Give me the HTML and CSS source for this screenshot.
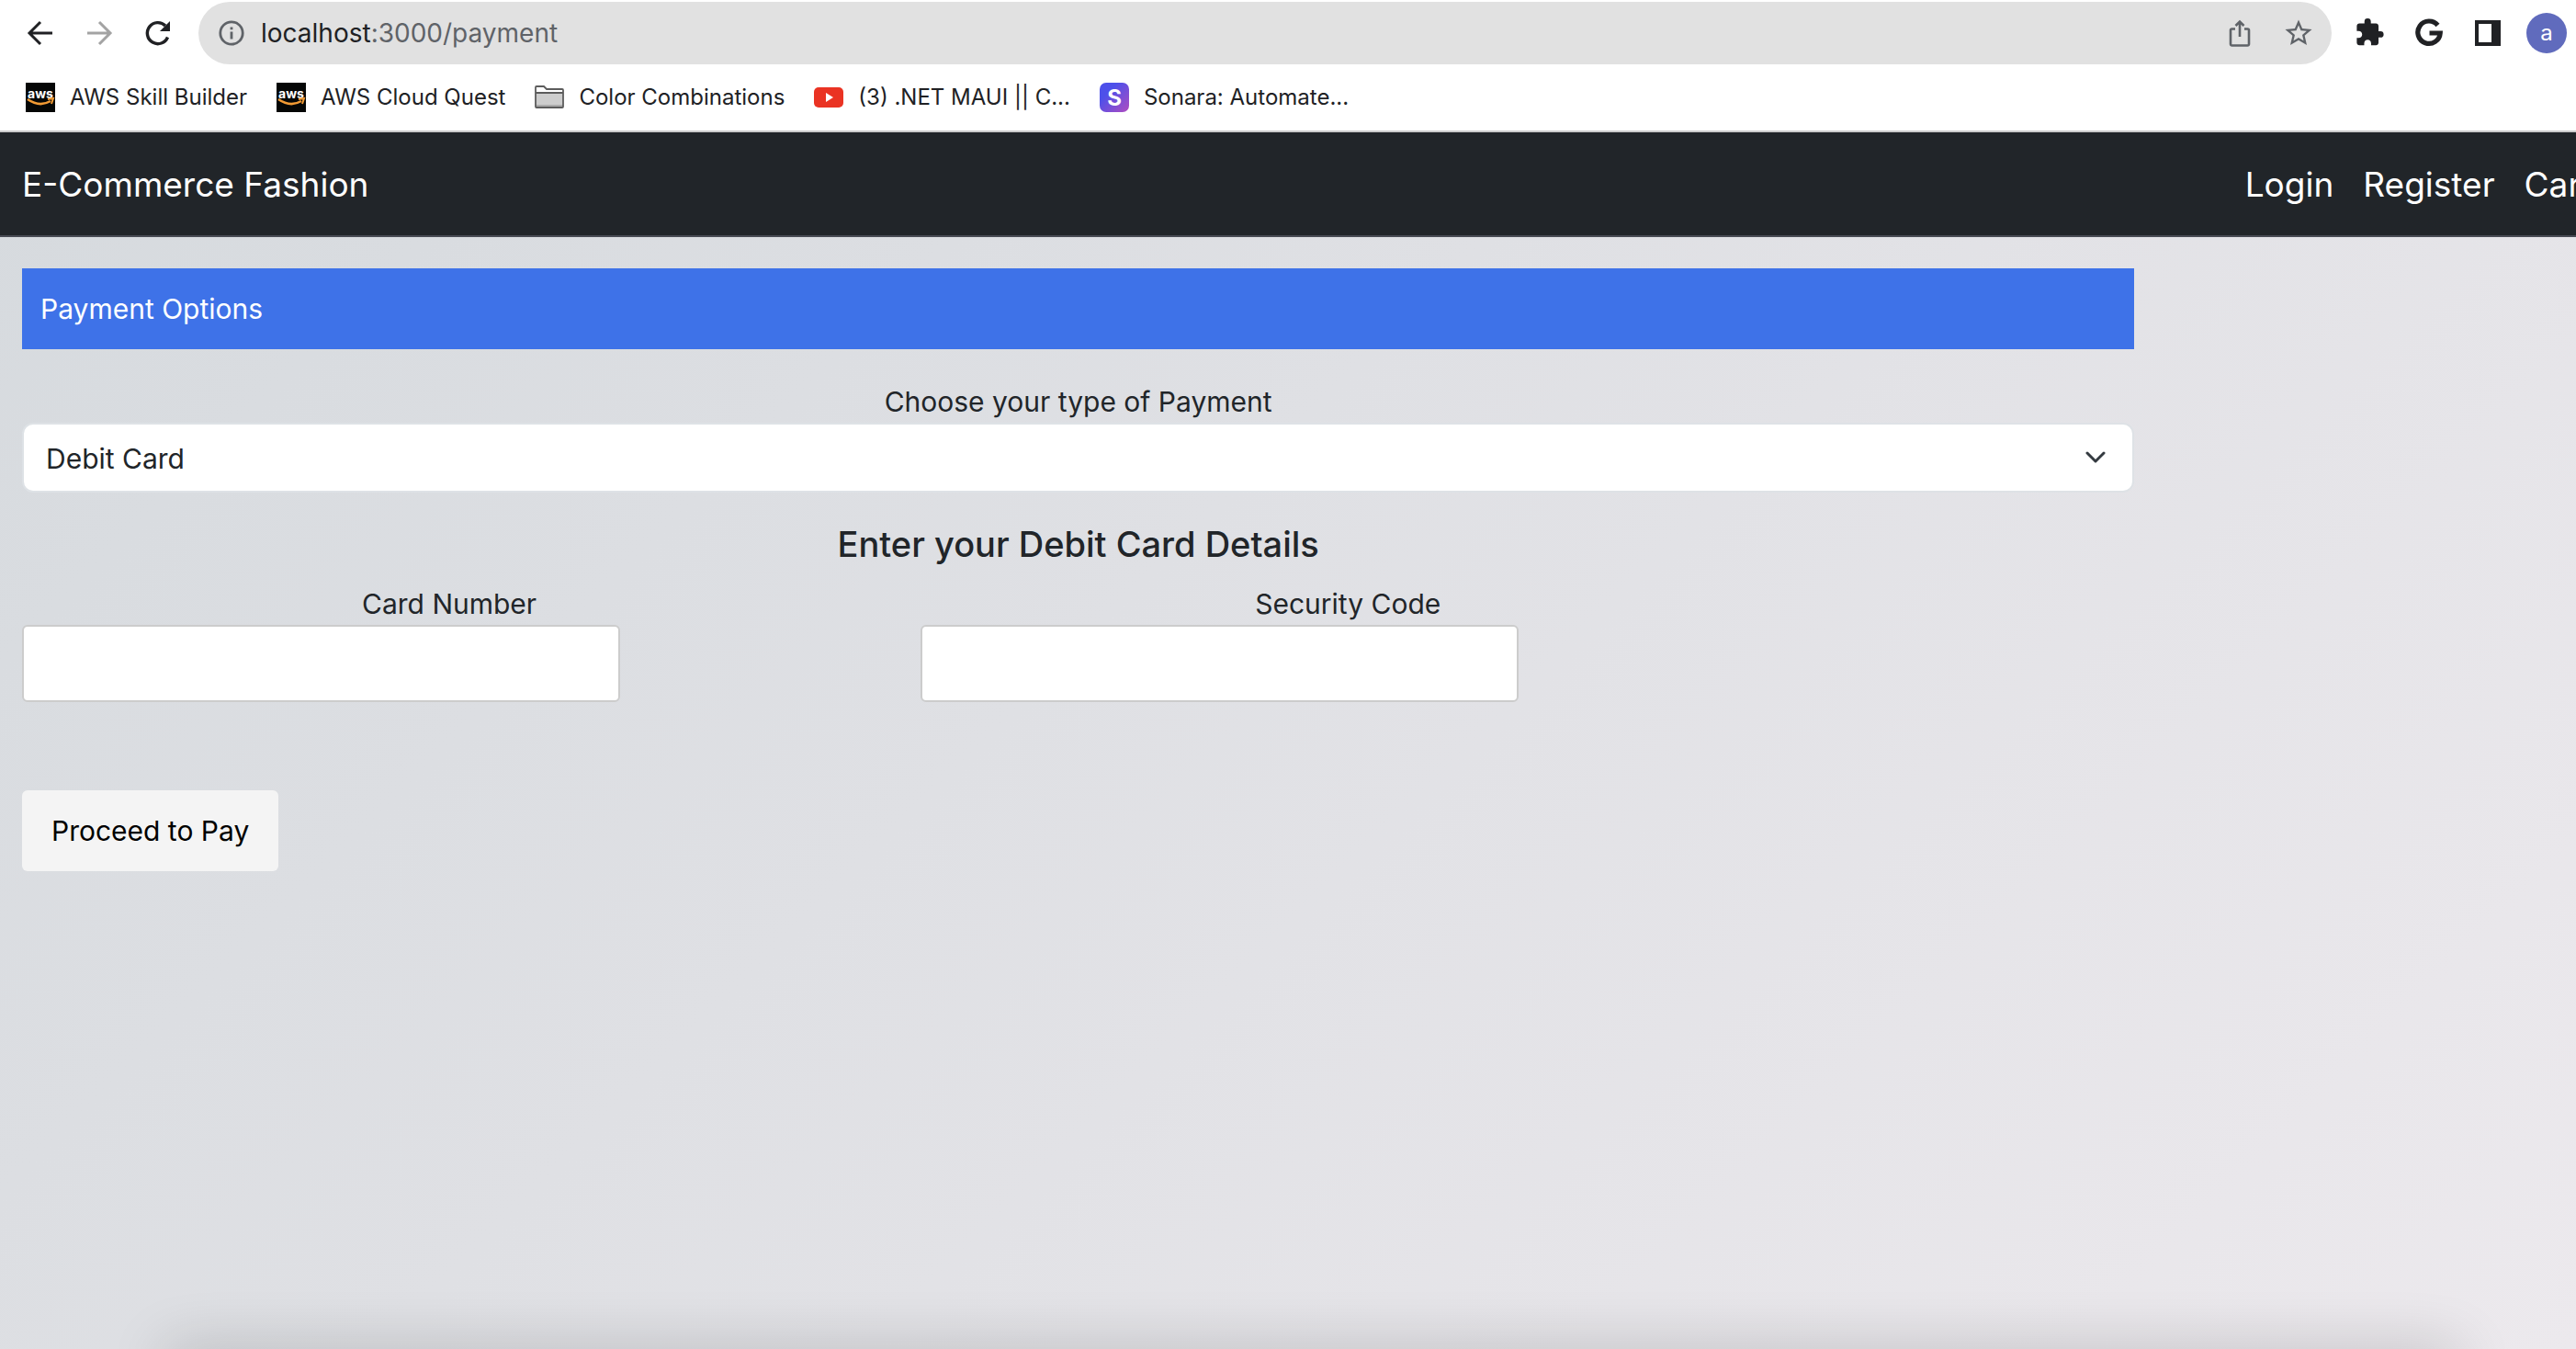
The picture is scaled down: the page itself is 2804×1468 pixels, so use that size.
FILE: index.html
```html
<!DOCTYPE html>
<html lang="en">
<head>
<meta charset="utf-8">
<meta name="viewport" content="width=device-width, initial-scale=1">
<title>E-Commerce Fashion</title>
<link rel="stylesheet" href="styles.css">
</head>
<body>
<header class="browser">
  <div class="toolbar">
    <div class="history">
      <button class="tool" type="button" aria-label="Back"><svg viewBox="0 0 32 32"><path d="M29 16H4M16 4 4 16l12 12" fill="none" stroke="#202124" stroke-width="3"/></svg></button>
      <button class="tool" type="button" aria-label="Forward"><svg viewBox="0 0 32 32"><path d="M3 16h25M16 4l12 12-12 12" fill="none" stroke="#a3a3a3" stroke-width="3"/></svg></button>
      <button class="tool" type="button" aria-label="Reload"><svg viewBox="0 0 32 32"><path d="M26.500 20.500A11.500 11.500 0 1 1 24 8" fill="none" stroke="#202124" stroke-width="3.400"/><path d="M29 3v11H18z" fill="#202124"/></svg></button>
    </div>
    <div class="address">
      <svg class="info" viewBox="0 0 32 32"><circle cx="16" cy="16" r="12.200" fill="none" stroke="#5f6368" stroke-width="2.800"/><path d="M14.600 14.500h2.800v8h-2.800zM14.600 9.500h2.800v2.800h-2.800z" fill="#5f6368"/></svg>
      <span class="url">localhost<span class="url-path">:3000/payment</span></span>
      <button class="tool" type="button" aria-label="Share"><svg viewBox="0 0 32 32"><path d="M11 11.500H7.500a1.500 1.500 0 0 0-1.500 1.500v15a1.500 1.500 0 0 0 1.500 1.500h17A1.500 1.500 0 0 0 26 28V13a1.500 1.500 0 0 0-1.500-1.500H21M16 20V3.500M11.500 8 16 3.500 20.500 8" fill="none" stroke="#5f6368" stroke-width="2.600"/></svg></button>
      <button class="tool" type="button" aria-label="Bookmark this page"><svg viewBox="1 1 22 22"><path d="m22 9.240-7.190-.62L12 2 9.190 8.630 2 9.240l5.460 4.730L5.820 21 12 17.270 18.180 21l-1.630-7.030zM12 15.400l-3.760 2.270 1-4.280-3.320-2.880 4.380-.38L12 6.100l1.710 4.040 4.380.38-3.320 2.880 1 4.280z" fill="#5f6368"/></svg></button>
    </div>
    <div class="extras">
      <button class="tool" type="button" aria-label="Extensions"><svg viewBox="1 1 23 23"><path d="M20.500 11H19V7c0-1.100-.9-2-2-2h-4V3.500a2.500 2.500 0 0 0-5 0V5H4c-1.100 0-1.990.9-1.990 2v3.800H3.500c1.490 0 2.700 1.210 2.700 2.700s-1.210 2.700-2.700 2.700H2V20c0 1.100.9 2 2 2h3.800v-1.500c0-1.490 1.210-2.700 2.700-2.700s2.700 1.210 2.700 2.700V22H17c1.100 0 2-.9 2-2v-4h1.500a2.500 2.500 0 0 0 0-5z" fill="#202124"/></svg></button>
      <button class="tool" type="button" aria-label="Google search"><svg viewBox="0 0 32 32"><path d="M25.500 7.500A12.200 12.200 0 1 0 28.200 16H16.500" fill="none" stroke="#202124" stroke-width="5.200"/></svg></button>
      <button class="tool" type="button" aria-label="Side panel"><svg viewBox="0 0 32 32"><path d="M2 2h28v28H2zM6 6v20h14V6z" fill="#202124" fill-rule="evenodd"/></svg></button>
    </div>
    <button class="avatar" type="button" aria-label="Profile">a</button>
  </div>
  <nav class="bookmarks" aria-label="Bookmarks">
    <a href="#"><svg viewBox="0 0 32 32"><path d="M0 0h32v32H0z" fill="#050706"/><text x="16" y="17" class="aws-word">aws</text><path d="M2 18q13 9 25 2" fill="none" stroke="#f29b34" stroke-width="2.600"/><path d="m24 18 6-1-2 6" fill="none" stroke="#f29b34" stroke-width="2"/></svg>AWS Skill Builder</a>
    <a href="#"><svg viewBox="0 0 32 32"><path d="M0 0h32v32H0z" fill="#050706"/><text x="16" y="17" class="aws-word">aws</text><path d="M2 18q13 9 25 2" fill="none" stroke="#f29b34" stroke-width="2.600"/><path d="m24 18 6-1-2 6" fill="none" stroke="#f29b34" stroke-width="2"/></svg>AWS Cloud Quest</a>
    <a href="#"><svg viewBox="0 0 32 32"><path d="M1 27V5q0-1 1-1h8l3 3h17q1 0 1 1v19z" fill="#fff"/><path d="M1 11h30v13H1z" fill="#cdcdcd"/><path d="M1 24h30v3H1z" fill="#ababab"/><path d="M1 26V5q0-1 1-1h8l3 3h17q1 0 1 1v18q0 1-1 1H2q-1 0-1-1zM1 11h30" fill="none" stroke="#5c5c5c" stroke-width="1.800"/></svg>Color Combinations</a>
    <a href="#"><svg viewBox="0 0 32 32"><rect y="5" width="32" height="22" rx="5" fill="#ea3323"/><path d="m13 11 8 5-8 5z" fill="#fff"/></svg>(3) .NET MAUI || C...</a>
    <a href="#"><svg viewBox="0 0 32 32"><defs><linearGradient id="sonara" x2="1" y2="1"><stop offset=".3" stop-color="#4d50ea"/><stop offset="1" stop-color="#b04cc0"/></linearGradient></defs><rect width="32" height="32" rx="7" fill="url(#sonara)"/><text x="16" y="25" class="sonara-letter">S</text></svg>Sonara: Automate...</a>
  </nav>
</header>
<div class="site">
  <nav class="navbar" aria-label="Main">
    <a href="#">E-Commerce Fashion</a>
    <div class="nav-links"><a href="#">Login</a><a href="#">Register</a><a href="#">Cart</a></div>
  </nav>
  <main class="payment">
    <div class="banner">Payment Options</div>
    <form class="form">
      <label class="label" for="type">Choose your type of Payment</label>
      <div class="select-wrap">
        <select id="type" class="select"><option>Debit Card</option><option>Credit Card</option></select>
        <svg class="chevron" viewBox="0 0 32 32"><path d="m7 11 9 9 9-9" fill="none" stroke="#343a40" stroke-width="3" stroke-linecap="round" stroke-linejoin="round"/></svg>
      </div>
      <h2 class="heading">Enter your Debit Card Details</h2>
      <div class="fields">
        <div><label class="label" for="number">Card Number</label><input class="input" id="number" type="text"></div>
        <div><label class="label" for="code">Security Code</label><input class="input" id="code" type="text"></div>
      </div>
      <button class="pay" type="submit">Proceed to Pay</button>
    </form>
  </main>
  <div class="edge-shadow"></div>
</div>
</body>
</html>
```

FILE: styles.css
```css
* { box-sizing: border-box; }

body {
  margin: 0;
  min-height: 100vh;
  display: flex;
  flex-direction: column;
  overflow-x: clip;
  background: #fff;
  color: #212529;
  font-family: Inter, "Liberation Sans", sans-serif;
  font-size: 30px;
  line-height: 48px;
}

a { color: inherit; text-decoration: none; white-space: nowrap; }

button, input, select { font: inherit; }

.browser { border-bottom: 2px solid #cbcbcb; color: #202124; }

.toolbar {
  display: flex;
  align-items: center;
  gap: 26px;
  padding: 2px 10px 0 28px;
}

.history, .extras { display: flex; align-items: center; gap: 32px; }

.tool {
  width: 32px;
  height: 32px;
  padding: 0;
  border: 0;
  background: none;
}

.tool svg { display: block; width: 100%; height: 100%; }

.address {
  flex: 1;
  display: flex;
  align-items: center;
  gap: 32px;
  height: 68px;
  margin-left: 2px;
  padding: 0 20px;
  border-radius: 34px;
  background: #e1e1e1;
}

.info { width: 32px; height: 32px; }

.url { flex: 1; margin-left: -16px; font-size: 28px; }

.url-path { color: #5f6368; }

.avatar {
  width: 44px;
  height: 44px;
  padding: 0;
  border: 0;
  border-radius: 50%;
  background: #606bbd;
  color: #fff;
  font-size: 24px;
  line-height: 40px;
}

.bookmarks {
  display: flex;
  gap: 32px;
  height: 72px;
  padding: 0 28px;
  font-size: 24px;
}

.bookmarks a { display: flex; align-items: center; gap: 16px; }

.bookmarks svg { width: 32px; height: 32px; }

.aws-word { font-size: 14px; font-weight: 700; fill: #fff; text-anchor: middle; }

.sonara-letter { font-size: 24px; font-weight: 700; fill: #fff; text-anchor: middle; }

.site {
  position: relative;
  flex: 1;
  overflow: hidden;
  background: linear-gradient(135deg, #d6dade 0%, #dfe0e4 42%, #ece9ed 100%);
}

.navbar {
  display: flex;
  align-items: center;
  justify-content: space-between;
  height: 114px;
  padding: 2px 24px 0;
  border-bottom: 2px solid #484b54;
  background: #212529;
  color: #fff;
  font-size: 37px;
}

.nav-links { display: flex; gap: 32px; margin-right: -42px; }

.payment { width: 82%; margin: 34px 0 0 24px; }

.banner {
  padding: 20px;
  background: #3e72e8;
  color: #fff;
}

.form { display: flex; flex-direction: column; margin-top: 32px; }

.label { display: block; padding-top: 2px; line-height: 46px; text-align: center; }

.select-wrap { display: grid; align-items: center; }

.select {
  grid-area: 1 / 1;
  width: 100%;
  height: 76px;
  padding: 2px 24px 0;
  border: 2px solid #dee2e6;
  border-radius: 12px;
  appearance: none;
  background: #fff;
  color: #212529;
}

.chevron {
  grid-area: 1 / 1;
  justify-self: end;
  width: 32px;
  height: 32px;
  margin-right: 26px;
  pointer-events: none;
}

.heading {
  margin: 32px 0 16px;
  font-size: 38px;
  font-weight: 500;
  line-height: 48px;
  text-align: center;
}

.fields {
  display: grid;
  grid-template-columns: 1fr 1fr;
  gap: 48px;
  width: 83%;
}

.input {
  display: block;
  width: 70%;
  height: 84px;
  padding: 0 20px;
  border: 2px solid #ccc;
  border-radius: 6px;
  background: #fff;
}

.pay {
  align-self: flex-start;
  margin-top: 96px;
  padding: 20px 32px;
  border: 0;
  border-radius: 6px;
  background: #f4f4f4;
  color: #000;
}

/* soft shade along the lower edge of the viewport */
.edge-shadow {
  position: absolute;
  right: 128px;
  bottom: -40px;
  left: 180px;
  height: 40px;
  box-shadow: 0 0 64px rgba(0, 0, 0, .2);
}
```
